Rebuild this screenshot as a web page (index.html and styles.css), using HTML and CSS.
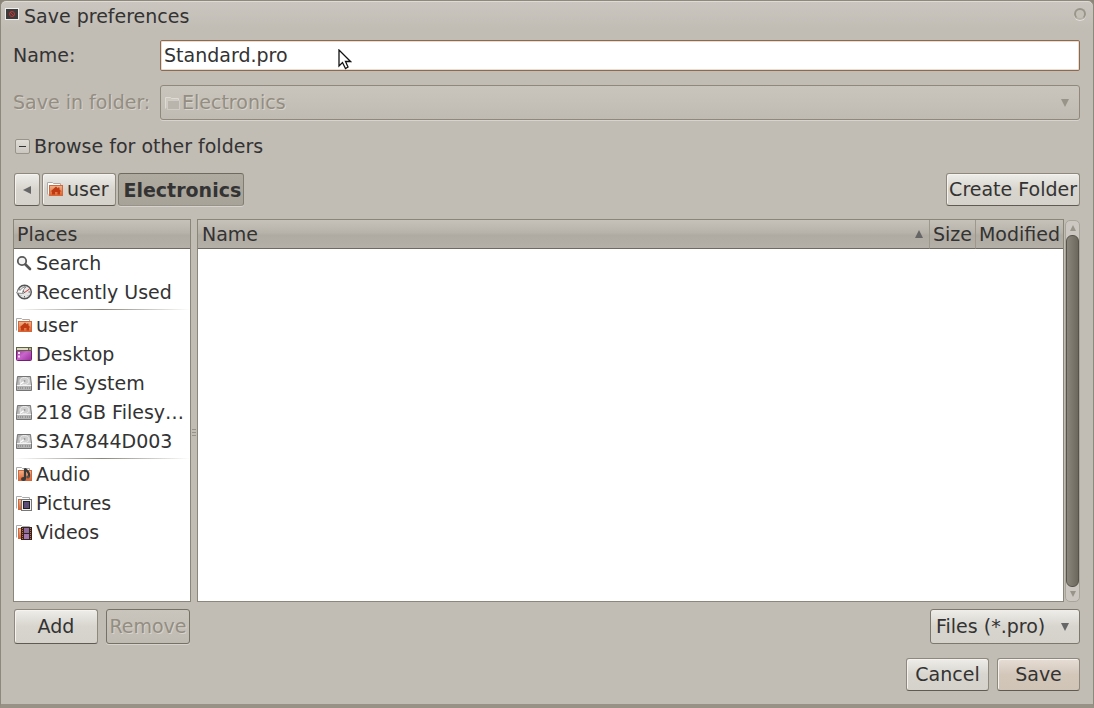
FILE: index.html
```
<!DOCTYPE html>
<html lang="en">
<head>
  <meta charset="UTF-8" />
  <meta name="viewport" content="width=device-width, initial-scale=1" />
  <title>Save preferences</title>
  <link rel="stylesheet" href="styles.css">
</head>
<body>

  <!-- Shared icons -->
  <svg class="sprite" width="0" height="0" aria-hidden="true">
    <defs>
      <linearGradient id="orange" x1="0" y1="0" x2="0" y2="1">
        <stop offset="0" stop-color="#efb48c" />
        <stop offset="1" stop-color="#e0602c" />
      </linearGradient>
      <linearGradient id="purple" x1="0" y1="0" x2="1" y2="1">
        <stop offset="0" stop-color="#8c2a8c" />
        <stop offset="0.5" stop-color="#c866cc" />
        <stop offset="1" stop-color="#9a2c9a" />
      </linearGradient>
      <linearGradient id="metal" x1="0" y1="0" x2="1" y2="1">
        <stop offset="0" stop-color="#a8a8a8" />
        <stop offset="1" stop-color="#dcdcdc" />
      </linearGradient>
    </defs>

    <symbol id="home" viewBox="0 0 16 16">
      <path d="M.5 13.500V1.500H5.500L6.500 2.500H13.500V5" fill="#fff" stroke="#aaa" />
      <rect x="2.500" y="4.500" width="13" height="10" fill="url(#orange)" stroke="#d0683c" />
      <path d="M9 5.500L3.500 10.500H5V13.500H8V11H10.500V13.500H13V10.500H14.500L12.500 8.500V6.500H11V7.500Z" fill="#bf3a12" />
    </symbol>
    <symbol id="search" viewBox="0 0 16 16">
      <circle cx="6" cy="6" r="4.200" fill="#f4f4f4" stroke="#5a5a5a" stroke-width="1.800" />
      <path d="M9.500 9.500L14 14" stroke="#555" stroke-width="2.600" stroke-linecap="round" />
    </symbol>
    <symbol id="recent" viewBox="0 0 16 16">
      <circle cx="8.500" cy="8" r="6.800" fill="#e6e6e6" stroke="#555" stroke-width="1.400" />
      <path d="M8.500 2.500V4M8.500 12V13.500M12.500 8H14M12 11.500L13 12.500M5 11.500L4 12.500" stroke="#666" />
      <path d="M8.500 8.500L13.500 5" stroke="#d33" />
      <path d="M8.500 9L6.500 5.500" stroke="#555" />
      <path d="M.5 9L3 4.500L4 6.500C6 3.500 8 3 10 3C8 4.500 7 6.500 6.500 8.500L7.500 9.500Z" fill="#fff" stroke="#777" stroke-width=".8" />
    </symbol>
    <symbol id="desktop" viewBox="0 0 16 16">
      <rect x=".5" y="1.500" width="15" height="13" rx="1" fill="url(#purple)" stroke="#6f2170" />
      <rect x="0" y="1" width="16" height="4" fill="#5f6044" />
      <path d="M1 3H12" stroke="#dcdcc0" stroke-width="2" />
      <path d="M13 3H15" stroke="#b4b490" stroke-width="2" />
      <path d="M2 7H4M2 10.500H4" stroke="#f6dcf6" stroke-width="2" />
    </symbol>
    <symbol id="drive" viewBox="0 0 16 16">
      <path d="M1.500 1.500H14.500L15.500 10.500V15.500H.5V10.500Z" fill="url(#metal)" stroke="#757575" />
      <path d="M1 10.500H15" stroke="#f4f4f4" />
      <ellipse cx="8.500" cy="6" rx="4.500" ry="3.500" fill="#cecece" stroke="#efefef" />
      <path d="M8.500 6L4 9.500" stroke="#fff" stroke-width="1.400" />
      <circle cx="8.500" cy="6" r="1" fill="#999" />
      <rect x="1" y="11" width="14" height="4" fill="#b4b4b4" />
      <path d="M2 13H7M9 13H14" stroke="#777" stroke-dasharray="1 1" />
    </symbol>
    <symbol id="audio" viewBox="0 0 16 16">
      <path d="M.5 13.500V1.500H5.500L6.500 2.500H13.500V5" fill="#fff" stroke="#aaa" />
      <rect x="2.500" y="4.500" width="13" height="10" fill="url(#orange)" stroke="#d0683c" />
      <path d="M9 13V2.500C10 5 14 5 13 11" fill="none" stroke="#3a3a38" stroke-width="2.200" />
      <ellipse cx="7.500" cy="13" rx="2.500" ry="2" fill="#3a3a38" />
      <ellipse cx="12" cy="11" rx="1.800" ry="1.500" fill="#55534e" />
    </symbol>
    <symbol id="pictures" viewBox="0 0 16 16">
      <path d="M.5 13.500V1.500H5.500L6.500 2.500H13.500V5" fill="#fff" stroke="#aaa" />
      <rect x="2.500" y="4.500" width="8" height="10" fill="url(#orange)" stroke="#d0683c" />
      <rect x="5.500" y="4.500" width="10" height="11" fill="#f2f2f2" stroke="#777" />
      <rect x="7.500" y="6.500" width="6" height="7" fill="#5c4d78" stroke="#222" />
    </symbol>
    <symbol id="videos" viewBox="0 0 16 16">
      <path d="M.5 13.500V1.500H5.500L6.500 2.500H13.500V5" fill="#fff" stroke="#aaa" />
      <rect x="2.500" y="4.500" width="8" height="10" fill="url(#orange)" stroke="#d0683c" />
      <rect x="5" y="3" width="11" height="13" fill="#332422" />
      <rect x="8" y="4" width="5" height="5" fill="#8f6a9c" />
      <rect x="8" y="10" width="5" height="5" fill="#a577b0" />
      <path d="M6.500 4V15M14.500 4V15" stroke="#d0683c" stroke-dasharray="1 1" />
    </symbol>
    <symbol id="folder" viewBox="0 0 16 16">
      <path d="M.5 13.500V2.500H5.500L6.500 3.500H13.500V5" fill="#cdc9c1" stroke="#dedbd5" />
      <path d="M2.500 5.500H14.500V14.500H2.500Z" fill="#b9b5ac" stroke="#d0ccc5" />
    </symbol>
    <symbol id="down" viewBox="0 0 8 8">
      <path d="M0 0H8L4 8Z" />
    </symbol>
    <symbol id="up" viewBox="0 0 8 8">
      <path d="M0 8H8L4 0Z" />
    </symbol>
  </svg>

  <form class="dialog">
    <header class="titlebar">
      <svg class="app-icon" width="14" height="12" viewBox="0 0 14 12">
        <rect x=".5" y=".5" width="13" height="11" fill="#3c3c3c" stroke="#eee" />
        <circle cx="7" cy="6" r="2.500" fill="none" stroke="#c33" />
        <path d="M5 4L9 8" stroke="#c33" />
      </svg>
      <h1>Save preferences</h1>
      <button type="button" class="close" aria-label="Close"></button>
    </header>

    <main class="content">
      <div class="fields">
        <label for="name">Name:</label>
        <input type="text" id="name" class="name" value="Standard.pro">

        <label for="folder" class="disabled">Save in folder:</label>
        <div class="select folder-select">
          <select id="folder" disabled>
            <option>Electronics</option>
          </select>
          <svg class="icon"><use href="#folder" /></svg>
          <svg class="arrow"><use href="#down" /></svg>
        </div>
      </div>

      <button type="button" class="expander" aria-expanded="true">
        <span class="minus"></span>Browse for other folders
      </button>

      <nav class="path">
        <button type="button" class="button back" aria-label="Back">
          <svg width="8" height="8" viewBox="0 0 8 8"><path d="M0 4L8 0V8Z" fill="#666" /></svg>
        </button>
        <button type="button" class="button crumb"><svg class="icon"><use href="#home" /></svg>user</button>
        <button type="button" class="button crumb active">Electronics</button>
        <button type="button" class="button create">Create Folder</button>
      </nav>

      <div class="browser">
        <section class="places">
          <h2>Places</h2>
          <ul>
            <li><svg class="icon"><use href="#search" /></svg><span>Search</span></li>
            <li><svg class="icon"><use href="#recent" /></svg><span>Recently Used</span></li>
            <li class="separator"></li>
            <li><svg class="icon"><use href="#home" /></svg><span>user</span></li>
            <li><svg class="icon"><use href="#desktop" /></svg><span>Desktop</span></li>
            <li><svg class="icon"><use href="#drive" /></svg><span>File System</span></li>
            <li><svg class="icon"><use href="#drive" /></svg><span>218 GB Filesy…</span></li>
            <li><svg class="icon"><use href="#drive" /></svg><span>S3A7844D003</span></li>
            <li class="separator"></li>
            <li><svg class="icon"><use href="#audio" /></svg><span>Audio</span></li>
            <li><svg class="icon"><use href="#pictures" /></svg><span>Pictures</span></li>
            <li><svg class="icon"><use href="#videos" /></svg><span>Videos</span></li>
          </ul>
        </section>

        <div class="grip"><span></span></div>

        <section class="files">
          <table>
            <thead>
              <tr>
                <th class="col-name"><div>Name<svg class="arrow"><use href="#up" /></svg></div></th>
                <th>Size</th>
                <th>Modified</th>
              </tr>
            </thead>
          </table>
        </section>

        <div class="scrollbar">
          <svg><use href="#up" /></svg>
          <div class="thumb"></div>
          <svg><use href="#down" /></svg>
        </div>
      </div>

      <div class="tools">
        <button type="button" class="button">Add</button>
        <button type="button" class="button" disabled>Remove</button>
        <div class="select filter">
          <select aria-label="File type">
            <option>Files (*.pro)</option>
          </select>
          <svg class="arrow"><use href="#down" /></svg>
        </div>
      </div>

      <footer class="actions">
        <button type="button" class="button">Cancel</button>
        <button type="submit" class="button save">Save</button>
      </footer>
    </main>
  </form>

  <svg class="cursor" width="14" height="21" viewBox="0 0 14 21">
    <path d="M1 1V17L4.500 13.500L7.500 19.500L10 18L7.500 12.500H12.500Z" fill="#fff" stroke="#111" stroke-width="1.300" />
  </svg>

</body>
</html>
```
FILE: styles.css
```
* {
  box-sizing: border-box;
}

body {
  margin: 0;
  background: #8a8578;
  color: #333;
  font-family: "DejaVu Sans", sans-serif;
  font-size: 19px;
  line-height: 29px;
}

h1,
h2,
th {
  margin: 0;
  font-size: 19px;
  font-weight: normal;
}

button,
input,
select {
  margin: 0;
  color: #333;
  font: inherit;
}

.sprite {
  position: absolute;
}

.icon {
  width: 16px;
  height: 16px;
  flex: none;
}

.arrow {
  width: 8px;
  height: 8px;
  fill: #666;
}

.dialog {
  display: flex;
  flex-direction: column;
  min-height: 100vh;
  border: 1px solid #8f897d;
  border-bottom: 4px solid #989286;
  border-radius: 6px 6px 0 0;
  background: linear-gradient(#cbc6bf, #c1bcb4 28px);
  box-shadow: inset 0 1px #dedad4;
}

/* Title bar */
.titlebar {
  display: flex;
  align-items: flex-start;
  padding: 1px 7px 0 4px;
}

.app-icon {
  margin: 6px 5px 0 0;
}

.close {
  width: 12px;
  height: 12px;
  margin: 6px 0 0 auto;
  padding: 0;
  border: 2px solid #9a958b;
  border-bottom-color: #b8b3aa;
  border-radius: 50%;
  background: #c4bfb7;
  box-shadow: 0 1px #e2ded8;
}

/* Dialog body */
.content {
  display: flex;
  flex: 1;
  flex-direction: column;
  padding: 9px 13px 13px 12px;
}

.fields {
  display: grid;
  grid-template-columns: 133px 1fr;
  gap: 14px;
  align-items: center;
}

.fields label {
  white-space: nowrap;
}

.disabled {
  color: #938d82;
  text-shadow: 1px 1px #d8d4cd;
}

.name {
  width: 100%;
  height: 31px;
  padding: 0 3px 2px;
  border: 1px solid #8c6a50;
  border-radius: 2px;
  outline: none;
  background: #fff;
  box-shadow: inset 0 0 0 1px #ecdccf;
}

.select {
  display: grid;
  align-items: center;
}

.select > * {
  grid-area: 1 / 1;
}

.select select {
  width: 100%;
  height: 35px;
  padding: 0 32px 0 5px;
  border: 1px solid #7d786d;
  border-radius: 3px;
  appearance: none;
  background: linear-gradient(#eeede9, #d8d5ce 50%, #d5d2cb);
}

.select .icon,
.select .arrow {
  pointer-events: none;
}

.select .arrow {
  margin-right: 11px;
  justify-self: end;
}

.select .icon {
  margin-left: 5px;
}

.folder-select select {
  padding-left: 21px;
  border-color: #8f897d;
  background: linear-gradient(#c9c5bd, #c0bbb2);
  box-shadow: 0 1px #d8d4cd;
  color: #938d82;
  opacity: 1;
  text-shadow: 1px 1px #d8d4cd;
}

.folder-select .arrow {
  fill: #99948a;
}

.expander {
  display: flex;
  align-items: center;
  align-self: flex-start;
  gap: 4px;
  margin: 12px 0;
  padding: 0 0 0 2px;
  border: 0;
  background: none;
}

.minus {
  display: grid;
  width: 15px;
  height: 15px;
  place-items: center;
  border: 1px solid #99948a;
  border-radius: 2px;
  background: linear-gradient(#e0ddd7, #cbc7c0);
}

.minus::before {
  width: 7px;
  height: 1px;
  background: #333;
  content: "";
}

/* Buttons */
.button {
  height: 35px;
  padding: 0 2px;
  border: 1px solid #8f897d;
  border-bottom-color: #5f5b52;
  border-radius: 3px;
  background: linear-gradient(#eeede9, #d8d5ce 50%, #d5d2cb);
  box-shadow: inset 1px 1px #f4f3f0;
  white-space: nowrap;
}

.button:disabled {
  border-color: #767166;
  background: linear-gradient(#c9c5bd, #c0bbb2);
  box-shadow: 0 1px #d8d4cd;
  color: #938d82;
  text-shadow: 1px 1px #d8d4cd;
}

.path {
  display: flex;
  gap: 2px;
  padding-left: 1px;
}

.path .button {
  height: 33px;
}

.back {
  display: flex;
  width: 26px;
  align-items: center;
  justify-content: center;
}

.crumb {
  display: flex;
  align-items: center;
  gap: 4px;
}

.path .crumb {
  padding: 0 7px 0 4px;
}

.path .active {
  padding: 2px 2px 0 4px;
  border-color: #6f6a5f #827d72 #98938a #827d72;
  background: linear-gradient(#b0aba1, #a8a398);
  box-shadow: 0 1px #d8d4cd;
  font-weight: bold;
}

.create {
  margin-left: auto;
}

/* Places and file list */
.browser {
  display: flex;
  flex: 1;
  margin-top: 13px;
}

.places,
.files {
  border: 1px solid #8a867a;
  background: #fff;
}

.places {
  width: 178px;
}

.places h2,
.files th {
  height: 29px;
  border-bottom: 1px solid #6f6a60;
  background: linear-gradient(#c6c1b9, #b8b3aa 45%, #b0aba2 55%, #b5b0a7);
  line-height: 28px;
}

.places h2 {
  padding-left: 3px;
}

.places ul {
  margin: 0;
  padding: 0;
  list-style: none;
}

.places li {
  display: flex;
  height: 29px;
  align-items: center;
  gap: 4px;
  padding-left: 2px;
  white-space: nowrap;
}

.places .icon,
.crumb .icon {
  margin-bottom: 2px;
}

.places .separator {
  height: 4px;
  background: linear-gradient(90deg, transparent, #8a867a 50%, transparent) 0 2px / 100% 1px no-repeat;
}

.grip {
  display: grid;
  width: 6px;
  padding-top: 43px;
  place-items: center;
}

.grip span {
  width: 4px;
  height: 7px;
  border: solid #96918a;
  border-width: 1px 0;
  background: linear-gradient(#96918a, #96918a) 0 2px / 100% 1px no-repeat;
}

.files {
  flex: 1;
}

.files table {
  width: 100%;
  border-collapse: separate;
  border-spacing: 0;
}

.files th {
  padding: 0 3px;
  text-align: left;
}

.files th + th {
  width: 1px;
  border-left: 1px solid #9d978c;
}

.files .col-name {
  padding: 0 6px 0 4px;
}

.files .col-name div {
  display: flex;
  align-items: center;
  justify-content: space-between;
}

.scrollbar {
  display: flex;
  width: 15px;
  margin: 1px 0 0 1px;
  flex-direction: column;
  align-items: center;
  border: 1px solid #aaa59b;
  border-radius: 5px;
  background: #ccc8c1;
}

.scrollbar svg {
  width: 6px;
  height: 6px;
  margin: 4px 0;
  fill: #99948a;
}

.thumb {
  width: 13px;
  flex: 1;
  border: 1px solid #57534a;
  border-radius: 6px;
  background: linear-gradient(90deg, #8b867b, #6d685d);
}

.tools,
.actions {
  display: flex;
  gap: 8px;
}

.tools {
  margin-top: 7px;
  padding-left: 1px;
}

.tools .button {
  width: 84px;
}

.filter {
  width: 150px;
  margin-left: auto;
}

.actions {
  justify-content: flex-end;
  margin-top: 14px;
}

.actions .button {
  width: 83px;
  height: 33px;
}

.actions .save {
  background: linear-gradient(#e6ddd5, #d3c7ba 50%, #cfc4b6);
}

/* Mouse pointer */
.cursor {
  position: absolute;
  top: 49px;
  left: 338px;
}
```
